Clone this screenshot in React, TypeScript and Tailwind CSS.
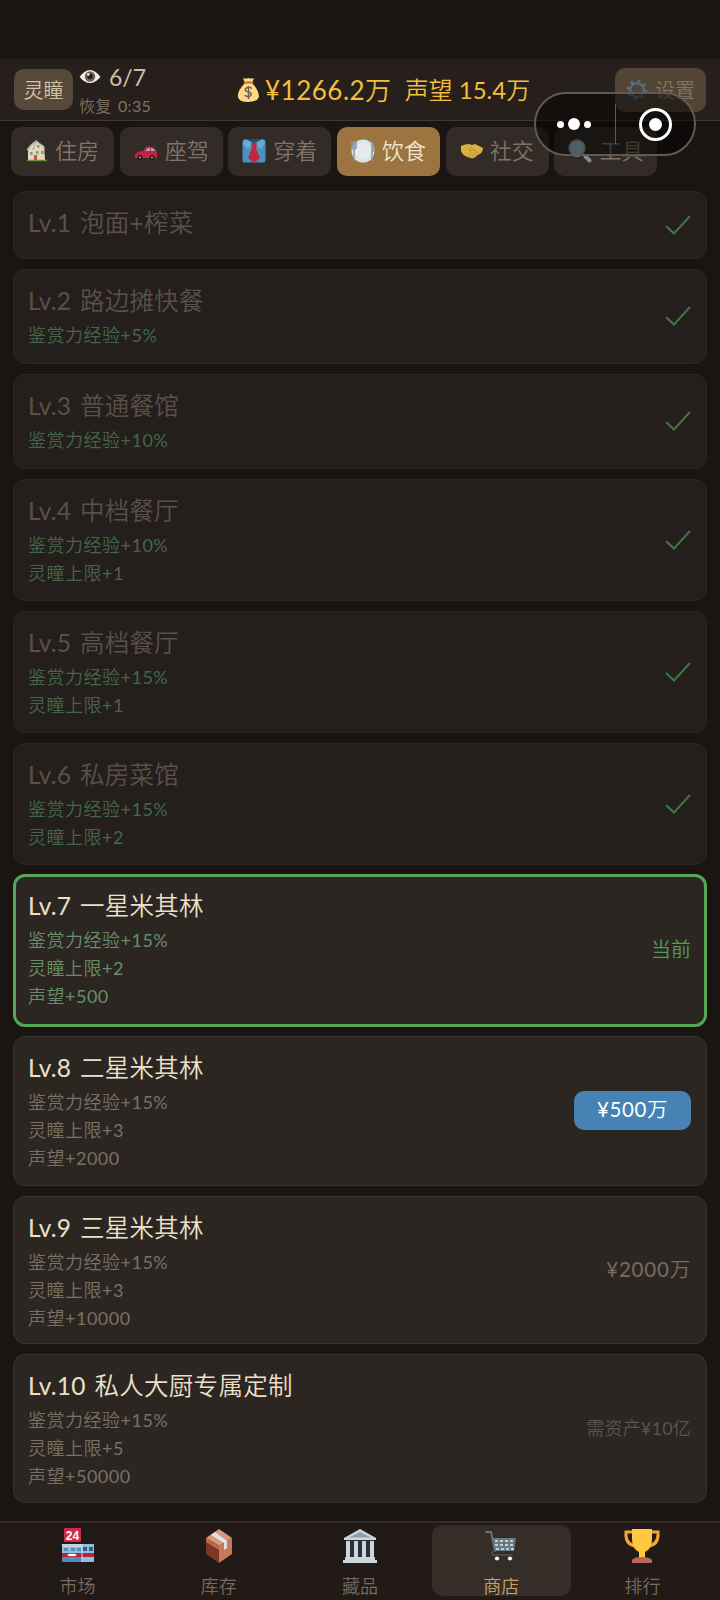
import type { ReactNode } from 'react';

type Status = 'owned' | 'current' | 'buy' | 'locked' | 'need';

interface Level {
  name: string;
  perks: string[];
  status: Status;
  label?: string;
  size: string;
}

const levels: Level[] = [
  { name: 'Lv.1 泡面+榨菜', perks: [], status: 'owned', size: 'h-[68px] mb-[10px]' },
  { name: 'Lv.2 路边摊快餐', perks: ['鉴赏力经验+5%'], status: 'owned', size: 'h-[95px] mb-[10px]' },
  { name: 'Lv.3 普通餐馆', perks: ['鉴赏力经验+10%'], status: 'owned', size: 'h-[95px] mb-[10px]' },
  { name: 'Lv.4 中档餐厅', perks: ['鉴赏力经验+10%', '灵瞳上限+1'], status: 'owned', size: 'h-[122px] mb-[10px]' },
  { name: 'Lv.5 高档餐厅', perks: ['鉴赏力经验+15%', '灵瞳上限+1'], status: 'owned', size: 'h-[122px] mb-[10px]' },
  { name: 'Lv.6 私房菜馆', perks: ['鉴赏力经验+15%', '灵瞳上限+2'], status: 'owned', size: 'h-[122px] mb-[9px]' },
  { name: 'Lv.7 一星米其林', perks: ['鉴赏力经验+15%', '灵瞳上限+2', '声望+500'], status: 'current', label: '当前', size: 'h-[153px] mb-[9px]' },
  { name: 'Lv.8 二星米其林', perks: ['鉴赏力经验+15%', '灵瞳上限+3', '声望+2000'], status: 'buy', label: '¥500万', size: 'h-[150px] mb-[10px]' },
  { name: 'Lv.9 三星米其林', perks: ['鉴赏力经验+15%', '灵瞳上限+3', '声望+10000'], status: 'locked', label: '¥2000万', size: 'h-[148px] mb-[10px]' },
  { name: 'Lv.10 私人大厨专属定制', perks: ['鉴赏力经验+15%', '灵瞳上限+5', '声望+50000'], status: 'need', label: '需资产¥10亿', size: 'h-[149px]' },
];

const EyeIcon = () => (
  <svg width="22" height="16" viewBox="0 0 22 16">
    <path d="M0.500 8Q11-6 21.500 8Q11 20 .5 8Z" fill="#f0eeea" />
    <circle cx="11" cy="7.500" r="5.200" fill="#75604f" />
    <circle cx="11" cy="7.500" r="2.700" fill="#241e1a" />
    <circle cx="9.300" cy="5.500" r="1.300" fill="#fff" />
  </svg>
);

const MoneyBag = () => (
  <svg width="23" height="25" viewBox="0 0 23 25">
    <path d="M6 1q3 1 5.500 0q3 1 5.500 0l-2 5H8z" fill="#ffd983" />
    <path d="M8 6Q0 14 1 20q1 5 10 5t11-5q0-7-7-14z" fill="#ffd983" />
    <path d="M7.500 5.500h8" stroke="#b8733c" strokeWidth="2" strokeLinecap="round" />
    <path d="M15 11.500q-3-2-5.500-.5c-3 2-.5 3.500 2 4s4 2.500 1.500 4q-3 1.300-5.500-.8M11.500 9v13" fill="none" stroke="#68635a" strokeWidth="1.500" />
  </svg>
);

const HouseIcon = () => (
  <svg width="22" height="22" viewBox="0 0 22 22">
    <path d="M2 10l4-6 4-3 8 5 1 14H2z" fill="#ead9af" />
    <path d="M1 10L5 5l5-4-3 9M10 1l8 6v3" fill="none" stroke="#9eb7b6" strokeWidth="1.300" />
    <path d="M4 12h2.500v3H4zm6-1h2.500v3H10zm5 0h2.500v3H15zM11 5h2.500v2.500H11z" fill="#58a5bd" />
    <path d="M8 15h3v5H8z" fill="#b8584f" />
    <path d="M1 20.500h20" stroke="#698f3b" strokeWidth="1.500" />
  </svg>
);

const CarIcon = () => (
  <svg width="24" height="22" viewBox="0 0 24 22">
    <path d="M1 14q3-3 8-3l3-4q5-2 9 2l2 3v6H2q-2-1-1-4z" fill="#c9203f" />
    <path d="M11 11l3-3h2v3zm6-3q3 0 4 3h-4z" fill="#8fb4c2" />
    <circle cx="6" cy="17.500" r="2.500" fill="#1c1b1c" /><circle cx="18" cy="17.500" r="2.500" fill="#1c1b1c" />
    <circle cx="6" cy="17.500" r="1" fill="#aaa" /><circle cx="18" cy="17.500" r="1" fill="#aaa" />
  </svg>
);

const TieIcon = () => (
  <svg width="24" height="24" viewBox="0 0 24 24">
    <rect x=".5" y=".5" width="23" height="23" rx="2" fill="#4a91c1" />
    <path d="M4 0h16l-8 5z" fill="#284d69" />
    <path d="M3 0L1 5l5 5 5-6zm18 0l2 5-5 5-5-6z" fill="#67abd2" />
    <path d="M9 4h6l-1 5 4 10-6 5-6-5 4-10z" fill="#bd2940" />
  </svg>
);

const PlateIcon = () => (
  <svg width="24" height="24" viewBox="0 0 24 24">
    <circle cx="12" cy="12" r="11.500" fill="#dce4e9" /><circle cx="12" cy="12" r="8" fill="#e5ecf0" />
    <path d="M1 2v6q0 2 2 2v12M3 2v7M5 2v6q0 2-2 2M21 22V3q2 2 2 9h-2" fill="none" stroke="#8999a1" strokeWidth="1.500" />
  </svg>
);

const HandshakeIcon = () => (
  <svg width="22" height="18" viewBox="0 0 22 18">
    <path d="M0 4q4-2 8-2l3 1 3-1 8 4q0 5-5 7l-4 3q-3 1-6-1-5-1-7-6z" fill="#dcb040" />
    <path d="M11 4L8 8q3 2 5-1l5 5M7 12l3 3m0-4 3 4m0-5 3 4" fill="none" stroke="#a8822f" strokeWidth=".8" />
  </svg>
);

const GlassIcon = () => (
  <svg width="24" height="24" viewBox="0 0 24 24">
    <path d="M14 14l3 3" stroke="#7f8b94" strokeWidth="2" />
    <path d="M17.500 17.500l4 4" stroke="#7f8b94" strokeWidth="4" strokeLinecap="round" />
    <circle cx="9" cy="9" r="8" fill="#a3bccd" stroke="#8092a0" strokeWidth="1.500" />
  </svg>
);

const GearIcon = () => (
  <svg width="22" height="22" viewBox="0 0 22 22" fill="none" stroke="#52728a">
    <circle cx="11" cy="11" r="6.800" strokeWidth="2" />
    <circle cx="11" cy="11" r="9" strokeWidth="2.600" strokeDasharray="3 4.069" />
  </svg>
);

const StoreIcon = () => (
  <svg width="34" height="36" viewBox="0 0 34 36">
    <rect x="3" y="0" width="17" height="14" rx="1" fill="#cf2b48" />
    <text x="11.500" y="11.500" textAnchor="middle" fontSize="12" className="fill-white font-['Liberation_Sans',sans-serif] font-bold">24</text>
    <path d="M1 16h32v18H1z" fill="#8ebddf" />
    <path d="M1 16h20v3H1z" fill="#c1d4dd" />
    <path d="M3 20h4v3H3zm7 0h4v3h-4zm6 0h4v3h-4z" fill="#558fba" />
    <path d="M22 19h4v4h-4zm6 0h4v4h-4z" fill="#345b77" />
    <path d="M1 25h32v4H1z" fill="#b7213f" />
    <path d="M1 29h20v5H1z" fill="#508abb" /><path d="M21 16v18" stroke="#cbdce5" />
    <ellipse cx="11" cy="27" rx="4.500" ry="1.200" fill="#fff" />
  </svg>
);

const BoxIcon = () => (
  <svg width="28" height="34" viewBox="0 0 28 34">
    <path d="M1 9L14 0l13 9-13 8z" fill="#d99a78" />
    <path d="M1 9l13 8v17L1 25z" fill="#7f3523" /><path d="M14 17l13-8v16l-13 9z" fill="#c9795a" />
    <path d="M1 9l13 8v4L1 13z" fill="#b96850" />
    <path d="M6 6l4-3 12 9v7l-3 2v-7z" fill="#dce2e5" />
  </svg>
);

const MuseumIcon = () => (
  <svg width="36" height="34" viewBox="0 0 36 34">
    <path d="M4 9h28v20H4z" fill="#283239" />
    <path d="M2 9L18 0l16 9v2H2z" fill="#ccd6dd" /><path d="M7 8.500L18 3l11 5.500z" fill="#8e9ca7" />
    <path d="M4 12h4v16H4zm8 0h4v16h-4zm8 0h4v16h-4zm8 0h4v16h-4zM3 28h30v3h2v3H1v-3h2z" fill="#ccd6dd" />
  </svg>
);

const CartIcon = () => (
  <svg width="32" height="32" viewBox="0 0 32 32">
    <path d="M1 2h5l4 19" fill="none" stroke="#68747c" strokeWidth="2" strokeLinecap="round" />
    <path d="M8 8h23l-2 13H10z" fill="#667984" />
    <path d="M10 11h20M10 15h19M11 19h18" stroke="#c3cdd3" strokeWidth="1.800" strokeDasharray="3 2" />
    <path d="M10 21q-5 1-2 4h20" fill="none" stroke="#4b545a" strokeWidth="1.500" />
    <circle cx="12" cy="28.500" r="2.500" fill="#fff" stroke="#292f33" /><circle cx="25" cy="28.500" r="2.500" fill="#fff" stroke="#292f33" />
  </svg>
);

const TrophyIcon = () => (
  <svg width="36" height="34" viewBox="0 0 36 34">
    <path d="M9 3H2q-1 13 10 14M27 3h7q1 13-10 14" fill="none" stroke="#f4a62f" strokeWidth="3" />
    <path d="M8 0h20v10q0 10-7 13v6h-6v-6Q8 20 8 10z" fill="#ffc83f" />
    <path d="M8 34v-3q2-3 10-3t10 3v3z" fill="#b96857" />
  </svg>
);

const categories: { label: string; icon: ReactNode; active?: boolean }[] = [
  { label: '住房', icon: <HouseIcon /> },
  { label: '座驾', icon: <CarIcon /> },
  { label: '穿着', icon: <TieIcon /> },
  { label: '饮食', icon: <PlateIcon />, active: true },
  { label: '社交', icon: <HandshakeIcon /> },
  { label: '工具', icon: <GlassIcon /> },
];

const navItems: { label: string; icon: ReactNode; active?: boolean }[] = [
  { label: '市场', icon: <StoreIcon /> },
  { label: '库存', icon: <BoxIcon /> },
  { label: '藏品', icon: <MuseumIcon /> },
  { label: '商店', icon: <CartIcon />, active: true },
  { label: '排行', icon: <TrophyIcon /> },
];

const cardStyle: Record<Status, string> = {
  owned: 'border border-[#2b2623] bg-[#241f1c]',
  current: 'border-[3px] border-[#55a856] bg-[#2c2622]',
  buy: 'border border-[#38312c] bg-[#2c2622]',
  locked: 'border border-[#38312c] bg-[#2c2622]',
  need: 'border border-[#38312c] bg-[#2c2622]',
};

const StatusMark = ({ level }: { level: Level }) => {
  switch (level.status) {
    case 'owned':
      return (
        <svg width="26" height="20" viewBox="0 0 26 20" fill="none" stroke="#41753f" strokeWidth="2">
          <path d="M1 11l8 7.500L25 1" />
        </svg>
      );
    case 'current':
      return <span className="text-[20px] text-[#4c9f50]">{level.label}</span>;
    case 'buy':
      return (
        <button className="h-[39px] w-[117px] rounded-[10px] bg-[#4682b4] pb-[2px] text-[20.500px] tracking-[0.6px] text-white">{level.label}</button>
      );
    case 'locked':
      return <span className="text-[20.500px] tracking-[0.8px] text-[#776c5f]">{level.label}</span>;
    default:
      return <span className="text-[18px] tracking-[0.2px] text-[#5d544a]">{level.label}</span>;
  }
};

const LevelCard = ({ level }: { level: Level }) => {
  const owned = level.status === 'owned';
  const perkColor = owned ? 'text-[#45664a]' : level.status === 'current' ? 'text-[#688e69]' : 'text-[#7b7064]';
  const pad = level.status === 'current' ? 'px-[12px] pt-[13px]' : 'px-[14px] pt-[15px]';
  return (
    <div className={`flex shrink-0 items-center justify-between rounded-xl ${cardStyle[level.status]} ${level.size} ${pad}`}>
      <div className="self-start">
        <h3 className={`h-[32px] text-[24.500px] leading-[32px] tracking-[0.3px] [word-spacing:2px] ${owned ? 'text-[#5a4f49]' : 'text-[#ece0ca]'}`}>{level.name}</h3>
        <div className="pt-[4px]">
          {level.perks.map((perk) => (
            <p key={perk} className={`h-[28px] text-[18px] leading-[28px] tracking-[0.500px] ${perkColor}`}>{perk}</p>
          ))}
        </div>
      </div>
      <div className="-mt-[16px] mr-px flex items-center">
        <StatusMark level={level} />
      </div>
    </div>
  );
};

export default function App() {
  return (
    <div className="relative flex h-[1600px] w-[720px] flex-col overflow-hidden bg-[#1a1512] font-['Lato','Noto_Sans_CJK_SC_DemiLight','Noto_Sans_CJK_SC',sans-serif] font-normal">
      <div className="h-[59px] shrink-0" />

      {/* Player stats */}
      <header className="flex h-[62px] shrink-0 items-center justify-between border-b border-[#403831] bg-[#261f1b] px-[14px]">
        <div className="flex w-[223px] items-center gap-[6px]">
          <button className="h-[41px] w-[59px] rounded-[10px] bg-[#574939] text-[20px] text-[#d2c3aa]">灵瞳</button>
          <div className="pt-[3px]">
            <div className="flex h-[30px] items-center gap-[8px] text-[23px] text-[#ccbfab]"><EyeIcon />6/7</div>
            <div className="h-[28px] text-[16px] leading-[28px] tracking-[0.3px] text-[#807362] [word-spacing:2px]">恢复 0:35</div>
          </div>
        </div>
        <div className="flex flex-1 items-center text-[#f2be3c]">
          <MoneyBag />
          <span className="ml-[5px] pt-px text-[26px] tracking-[0.500px]">¥1266.2万</span>
          <span className="ml-[13px] text-[24px]">声望 15.4万</span>
        </div>
        <button className="flex h-[44px] w-[91px] items-center justify-center gap-[7px] rounded-[10px] bg-[#524536] text-[20px] text-[#85745f]">
          <GearIcon />设置
        </button>
      </header>

      <nav className="flex h-[70px] shrink-0 gap-[5.700px] px-[11px] pt-[6px]">
        {categories.map((c) => (
          <button
            key={c.label}
            className={`flex h-[49px] w-[103px] items-center justify-center gap-[7px] rounded-[10px] pb-[2px] text-[22px] ${c.active ? 'bg-[#9b7440] text-[#f0e3cc]' : 'bg-[#332b27] text-[#817467]'}`}
          >
            {c.icon}{c.label}
          </button>
        ))}
      </nav>

      <main className="flex flex-1 flex-col px-[13px]">
        {levels.map((level) => <LevelCard key={level.name} level={level} />)}
      </main>

      <footer className="flex h-[79px] shrink-0 border-t-2 border-[#352c27] bg-[#221a17] px-[7px] pt-[2px]">
        {navItems.map((n) => (
          <button
            key={n.label}
            className={`mx-[1px] flex h-[71px] flex-1 flex-col items-center rounded-[10px] text-[18px] ${n.active ? 'bg-[#352d27] text-[#c9a063]' : 'text-[#776b60]'}`}
          >
            <span className="flex h-[41px] shrink-0 items-center">{n.icon}</span>
            <span className="mt-[7px] shrink-0 leading-[26px]">{n.label}</span>
          </button>
        ))}
      </footer>

      {/* Mini program capsule, floats over the header */}
      <div className="absolute top-[92px] left-[534px] flex h-[64px] w-[162px] items-center rounded-full border-2 border-[#625951] bg-black/50">
        <div className="flex w-[75px] items-center justify-center gap-[4px]">
          <i className="size-[7px] rounded-full bg-white" />
          <i className="size-[12px] rounded-full bg-white" />
          <i className="size-[7px] rounded-full bg-white" />
        </div>
        <div className="ml-[4px] h-[40px] w-px bg-[#625951]" />
        <div className="flex flex-1 justify-center">
          <div className="flex size-[33px] items-center justify-center rounded-full border-[3.500px] border-white">
            <i className="size-[13px] rounded-full bg-white" />
          </div>
        </div>
      </div>
    </div>
  );
}
